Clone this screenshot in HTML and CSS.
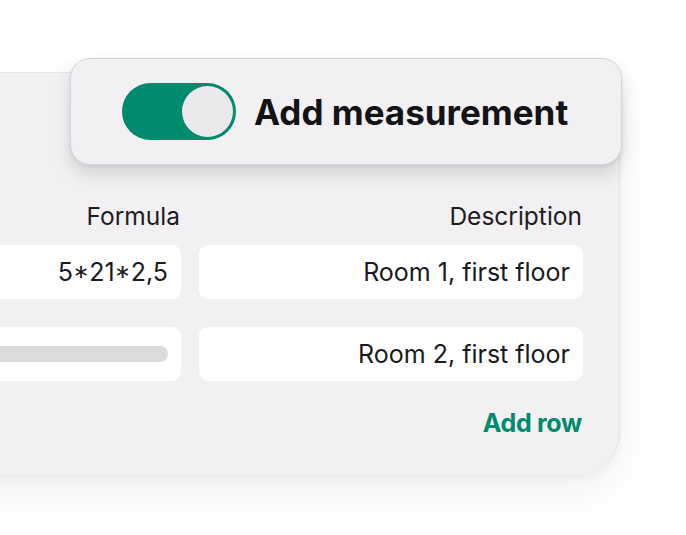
FILE: index.html
```html
<!DOCTYPE html>
<html lang="en">
<head>
<meta charset="utf-8">
<title>Add measurement</title>
<link rel="stylesheet" href="styles.css">
</head>
<body>
<div class="stage">
  <section class="panel">
    <div class="grid">
      <div class="label">Formula</div>
      <div class="label">Description</div>
      <div class="field">5*21*2,5</div>
      <div class="field">Room 1, first floor</div>
      <div class="field field-skeleton"><span class="skeleton"></span></div>
      <div class="field">Room 2, first floor</div>
    </div>
    <div class="actions"><span class="add-row">Add row</span></div>
  </section>
  <div class="toggle-card">
    <span class="toggle"><span class="knob"></span></span>
    <span class="toggle-label">Add measurement</span>
  </div>
</div>
</body>
</html>
```
FILE: styles.css
```css
html, body {
  margin: 0;
  padding: 0;
  background: #ffffff;
  overflow: hidden;
}
body {
  width: 686px;
  height: 535px;
  font-family: Inter, "Noto Sans", sans-serif;
  color: #1b1a1d;
}
.stage {
  position: relative;
  width: 686px;
  height: 535px;
  box-sizing: border-box;
  padding-top: 72px;
}
.panel {
  margin-left: -60px;
  width: 680px;
  height: 403px;
  box-sizing: border-box;
  background: #f2f0f3;
  border-radius: 0 0 42px 0;
  border-top: 1px solid #e6e4e7;
  border-right: 1px solid #e6e4e7;
  box-shadow: 0 18px 40px rgba(0, 0, 0, 0.06), 0 4px 10px rgba(0, 0, 0, 0.03);
  padding: 129px 36px 0 0;
  display: flex;
  flex-direction: column;
}
.grid {
  display: grid;
  grid-template-columns: 241px 384px;
  column-gap: 18px;
  row-gap: 0;
  justify-content: end;
}
.label {
  font-size: 24.5px;
  line-height: 28px;
  text-align: right;
  padding-right: 1px;
  margin-bottom: 15px;
  color: #1d1c1f;
}
.field {
  height: 54px;
  background: #ffffff;
  border-radius: 9px;
  display: flex;
  align-items: center;
  justify-content: flex-end;
  padding-right: 13px;
  font-size: 25px;
  color: #1b1a1d;
  margin-bottom: 28px;
}
.field-skeleton {
  padding-right: 13px;
}
.skeleton {
  display: block;
  height: 16px;
  width: 100%;
  background: #dcdadd;
  border-radius: 8px;
}
.actions {
  display: flex;
  justify-content: flex-end;
  padding-right: 1px;
}
.add-row {
  font-size: 25px;
  font-weight: 700;
  color: #008a6e;
  line-height: 28px;
  letter-spacing: -0.3px;
}
.toggle-card {
  position: absolute;
  left: 70px;
  top: 58px;
  width: 552px;
  height: 107px;
  box-sizing: border-box;
  background: #f2f0f3;
  border: 1.5px solid #d6d4d8;
  border-radius: 20px;
  box-shadow: 0 9px 18px rgba(0, 0, 0, 0.13), 0 2px 4px rgba(0, 0, 0, 0.06);
  display: flex;
  align-items: center;
  padding-left: 51px;
  gap: 18px;
}
.toggle {
  width: 114px;
  height: 57px;
  border-radius: 29px;
  background: #008a6e;
  display: flex;
  align-items: center;
  justify-content: flex-end;
  padding-right: 3px;
  box-sizing: border-box;
}
.knob {
  width: 51px;
  height: 51px;
  border-radius: 50%;
  background: #ebe9ec;
}
.toggle-label {
  font-size: 35px;
  font-weight: 700;
  color: #141316;
  letter-spacing: 0;
}
```
